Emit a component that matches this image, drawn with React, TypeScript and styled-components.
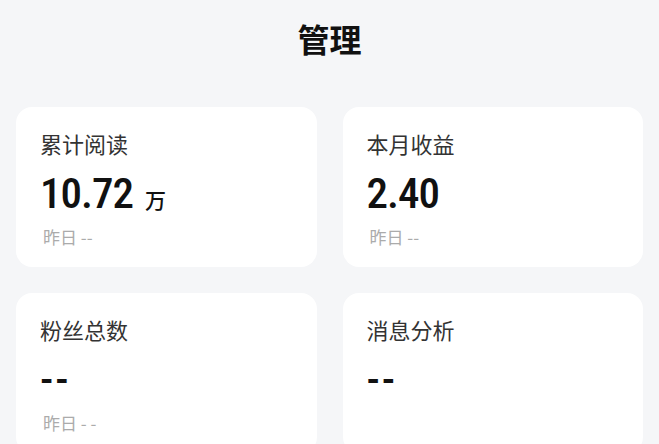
import * as React from "react";
import styled, { createGlobalStyle } from "styled-components";

const GlobalStyle = createGlobalStyle`
  html, body {
    margin: 0;
    padding: 0;
    background: #f5f6f8;
    font-family: "Noto Sans CJK SC", "Noto Sans", sans-serif;
    overflow: hidden;
  }
`;

const PageStyled = styled.div`
  width: 659px;
  height: 444px;
  background: #f5f6f8;
  overflow: hidden;
`;

const HeaderStyled = styled.div`
  display: flex;
  justify-content: center;
  align-items: center;
  height: 76px;
  margin-bottom: 31px;
  font-size: 32px;
  font-weight: 700;
  color: #111;
`;

const GridStyled = styled.div`
  display: grid;
  grid-template-columns: 1fr 1fr;
  gap: 26px;
  padding: 0 16px;
`;

const CardStyled = styled.div`
  display: flex;
  flex-direction: column;
  height: 160px;
  padding: 22px 24px 0;
  box-sizing: border-box;
  background: #fff;
  border-radius: 16px;
`;

const TitleStyled = styled.div`
  font-size: 22px;
  line-height: 29px;
  color: #333;
`;

const ValueRowStyled = styled.div`
  display: flex;
  align-items: baseline;
  margin-top: 12px;
  height: 46px;
`;

const NumberStyled = styled.span<{ $dash?: boolean }>`
  font-family: "Roboto Condensed", "Liberation Sans Narrow", "Roboto", sans-serif;
  font-weight: 500;
  font-size: 43px;
  line-height: 46px;
  letter-spacing: ${p => (p.$dash ? "2px" : "-1px")};
  color: #111;
`;

const UnitStyled = styled.span`
  margin-left: 12px;
  font-size: 21px;
  font-weight: 500;
  color: #111;
`;

const SubStyled = styled.div`
  margin-top: 10px;
  padding-left: 3px;
  font-size: 17px;
  line-height: 22px;
  color: #ababab;
`;

interface IStatCardProps {
  title: string;
  value: string;
  unit?: string;
  sub?: string;
}

const StatCard: React.FC<IStatCardProps> = ({ title, value, unit, sub }) => {
  return (
    <CardStyled>
      <TitleStyled>{title}</TitleStyled>
      <ValueRowStyled>
        <NumberStyled $dash={value === "--"}>{value}</NumberStyled>
        {unit ? <UnitStyled>{unit}</UnitStyled> : null}
      </ValueRowStyled>
      {sub ? <SubStyled>{sub}</SubStyled> : null}
    </CardStyled>
  );
};

const stats: IStatCardProps[] = [
  { title: "累计阅读", value: "10.72", unit: "万", sub: "昨日 --" },
  { title: "本月收益", value: "2.40", sub: "昨日 --" },
  { title: "粉丝总数", value: "--", sub: "昨日 - -" },
  { title: "消息分析", value: "--" }
];

export default function App() {
  return (
    <PageStyled>
      <GlobalStyle />
      <HeaderStyled>管理</HeaderStyled>
      <GridStyled>
        {stats.map(s => (
          <StatCard key={s.title} {...s} />
        ))}
      </GridStyled>
    </PageStyled>
  );
}
